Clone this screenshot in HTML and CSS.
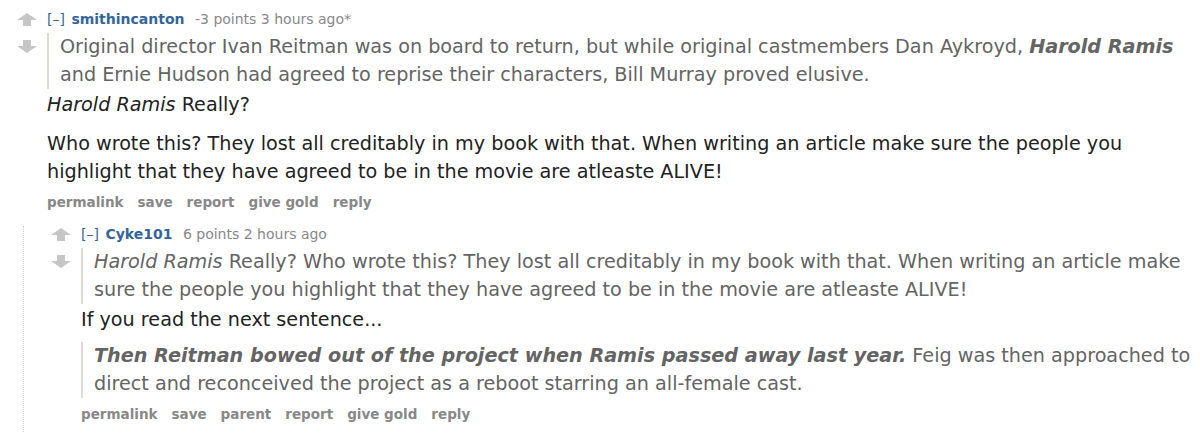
FILE: index.html
```html
<!DOCTYPE html>
<html>
<head>
<meta charset="utf-8">
<link rel="stylesheet" href="styles.css">
</head>
<body>
<div class="comment top">
  <div class="midcol">
    <svg class="arrow" viewBox="0 0 20 13" width="20" height="13"><path d="M10 0 L20 7 L14 7 L14 13 L6 13 L6 7 L0 7 Z"/></svg>
    <svg class="arrow down" viewBox="0 0 20 13" width="20" height="13"><path d="M10 13 L20 6 L14 6 L14 0 L6 0 L6 6 L0 6 Z"/></svg>
  </div>
  <div class="entry">
    <p class="tagline"><a class="expand">[–]</a> <a class="author">smithincanton</a> <span class="score">-3 points</span> <span class="time">3 hours ago*</span></p>
    <div class="md">
      <blockquote><p>Original director Ivan Reitman was on board to return, but while original castmembers Dan Aykroyd, <strong><em>Harold Ramis</em></strong> and Ernie Hudson had agreed to reprise their characters, Bill Murray proved elusive.</p></blockquote>
      <p><em>Harold Ramis</em> Really?</p>
      <p>Who wrote this? They lost all creditably in my book with that. When writing an article make sure the people you highlight that they have agreed to be in the movie are atleaste ALIVE!</p>
    </div>
    <ul class="buttons"><li>permalink</li><li>save</li><li>report</li><li>give gold</li><li>reply</li></ul>
    <div class="child">
      <div class="comment">
        <div class="midcol">
          <svg class="arrow" viewBox="0 0 20 13" width="20" height="13"><path d="M10 0 L20 7 L14 7 L14 13 L6 13 L6 7 L0 7 Z"/></svg>
          <svg class="arrow down" viewBox="0 0 20 13" width="20" height="13"><path d="M10 13 L20 6 L14 6 L14 0 L6 0 L6 6 L0 6 Z"/></svg>
        </div>
        <div class="entry">
          <p class="tagline"><a class="expand">[–]</a> <a class="author">Cyke101</a> <span class="score">6 points</span> <span class="time">2 hours ago</span></p>
          <div class="md">
            <blockquote><p><em>Harold Ramis</em> Really? Who wrote this? They lost all creditably in my book with that. When writing an article make sure the people you highlight that they have agreed to be in the movie are atleaste ALIVE!</p></blockquote>
            <p>If you read the next sentence...</p>
            <blockquote><p><strong><em>Then Reitman bowed out of the project when Ramis passed away last year.</em></strong> Feig was then approached to direct and reconceived the project as a reboot starring an all-female cast.</p></blockquote>
          </div>
          <ul class="buttons"><li>permalink</li><li>save</li><li>parent</li><li>report</li><li>give gold</li><li>reply</li></ul>
        </div>
      </div>
    </div>
  </div>
</div>
</body>
</html>
```
FILE: styles.css
```css
html, body {
  margin: 0;
  padding: 0;
  background: #fff;
}
body {
  font-family: Verdana, "DejaVu Sans", sans-serif;
  color: #222;
}
.comment {
  display: flex;
  align-items: flex-start;
}
.top {
  padding-left: 17px;
  padding-top: 11px;
}
.midcol {
  width: 30px;
  flex: none;
  display: flex;
  flex-direction: column;
  gap: 14px;
  padding-top: 2px;
}
.child .midcol {
  width: 30px;
  padding-top: 2px;
}
.arrow {
  display: block;
  fill: #c6c6c6;
}
.entry {
  flex: 1;
  min-width: 0;
}
.tagline {
  margin: 0;
  font-size: 14px;
  line-height: 16px;
  color: #888;
}
.expand {
  color: #369;
  margin-right: 2px;
}
.author {
  color: #369;
  font-weight: bold;
  margin-right: 6px;
}
.md {
  display: flex;
  flex-direction: column;
  font-size: 19.2px;
  line-height: 28px;
}
.md p {
  margin: 0;
}
.md blockquote {
  margin: 0;
  padding: 0 0 0 11px;
  border-left: 2px solid #dedbd2;
  color: #646464;
}
.md blockquote:first-child {
  margin-top: 6px;
}
.md p + p {
  margin-top: 11px;
}
.md blockquote + p {
  margin-top: 2px;
}
.md p + blockquote {
  margin-top: 8px;
}
.md blockquote p {
  margin: 0;
}
.md strong {
  font-weight: bold;
}
.buttons {
  list-style: none;
  margin: 6px 0 0 0;
  padding: 0;
  display: flex;
  gap: 14px;
  font-size: 13.5px;
  font-weight: bold;
  color: #888;
  line-height: 20px;
}
.child {
  margin-left: -24px;
  margin-top: 14px;
  border-left: 1px dotted #ccf;
  padding-left: 27px;
  padding-bottom: 20px;
}
```
